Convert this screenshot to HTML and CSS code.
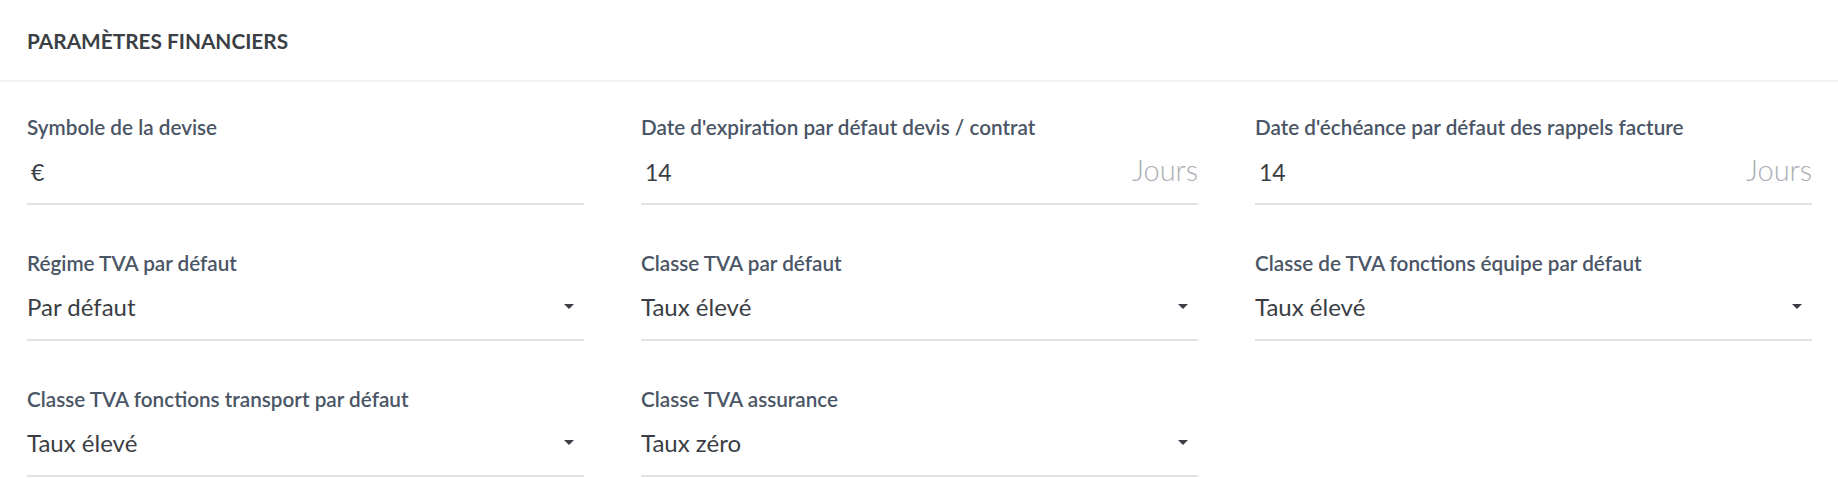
FILE: index.html
```
<!DOCTYPE html>
<html lang="fr">
<head>
    <meta charset="UTF-8">
    <meta name="viewport" content="width=device-width, initial-scale=1.0">
    <title>Paramètres financiers</title>
    <link rel="stylesheet" href="styles.css">
</head>
<body>
    <section class="panel">
        <div class="panel-header">PARAMÈTRES FINANCIERS</div>

        <div class="panel-body">
            <div class="field">
                <label>Symbole de la devise</label>
                <div class="input">
                    <span class="value">€</span>
                </div>
            </div>

            <div class="field">
                <label>Date d'expiration par défaut devis / contrat</label>
                <div class="input">
                    <span class="value">14</span>
                    <span class="suffix">Jours</span>
                </div>
            </div>

            <div class="field">
                <label>Date d'échéance par défaut des rappels facture</label>
                <div class="input">
                    <span class="value">14</span>
                    <span class="suffix">Jours</span>
                </div>
            </div>

            <div class="field">
                <label>Régime TVA par défaut</label>
                <div class="input select">
                    <span class="value">Par défaut</span>
                    <span class="caret"></span>
                </div>
            </div>

            <div class="field">
                <label>Classe TVA par défaut</label>
                <div class="input select">
                    <span class="value">Taux élevé</span>
                    <span class="caret"></span>
                </div>
            </div>

            <div class="field">
                <label>Classe de TVA fonctions équipe par défaut</label>
                <div class="input select">
                    <span class="value">Taux élevé</span>
                    <span class="caret"></span>
                </div>
            </div>

            <div class="field">
                <label>Classe TVA fonctions transport par défaut</label>
                <div class="input select">
                    <span class="value">Taux élevé</span>
                    <span class="caret"></span>
                </div>
            </div>

            <div class="field">
                <label>Classe TVA assurance</label>
                <div class="input select">
                    <span class="value">Taux zéro</span>
                    <span class="caret"></span>
                </div>
            </div>
        </div>
    </section>
</body>
</html>
```

FILE: styles.css
```
body {
    margin: 0;
    padding: 0;
    font-family: Lato, "Liberation Sans", sans-serif;
    background-color: #fff;
    color: #3a3e44;
}

.panel-header {
    display: flex;
    align-items: center;
    height: 80px;
    padding: 0 27px;
    font-size: 20.8px;
    font-weight: 700;
    color: #3b3f45;
    border-bottom: 2px solid #eef2f6;
}

.panel-body {
    display: grid;
    grid-template-columns: repeat(3, 1fr);
    column-gap: 57px;
    row-gap: 46px;
    padding: 33px 26px 0 27px;
}

.field label {
    display: block;
    line-height: 24px;
    font-size: 20.7px;
    font-weight: 600;
    color: #4a5566;
}

.field .input {
    display: flex;
    align-items: center;
    justify-content: space-between;
    box-sizing: border-box;
    height: 60px;
    padding-bottom: 4px;
    margin-top: 6px;
    border-bottom: 2px solid #e3e3e3;
}

.field .select {
    padding-bottom: 8px;
}

.field .value {
    padding-left: 4px;
    font-size: 23px;
    color: #3a3e44;
}

.field .select .value {
    padding-left: 0;
    font-size: 24px;
}

.field .suffix {
    margin-bottom: 6px;
    font-size: 29px;
    font-weight: 300;
    color: #a9aeb5;
}

.field .caret {
    width: 0;
    height: 0;
    margin-right: 10px;
    border-left: 5px solid transparent;
    border-right: 5px solid transparent;
    border-top: 5px solid #3a3e44;
}
```
